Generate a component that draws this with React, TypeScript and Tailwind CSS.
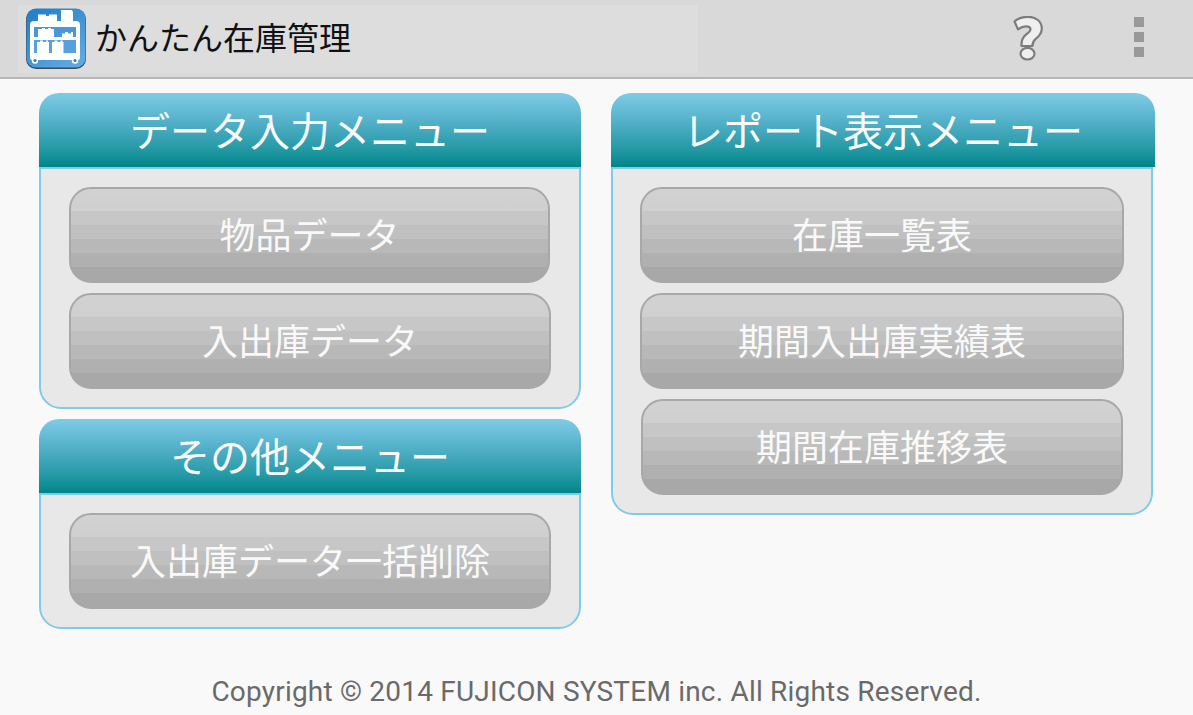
const jp = "font-['Noto_Sans_CJK_JP','Noto_Sans',sans-serif]";

function Logo() {
  return (
    <svg width="60" height="61" viewBox="0 0 60 61" className="shrink-0">
      <defs>
        <linearGradient id="lg" x1="0" y1="0" x2="0.7" y2="1">
          <stop offset="0" stopColor="#1f7cc6" />
          <stop offset="1" stopColor="#5ca8e2" />
        </linearGradient>
      </defs>
      <rect x="0" y="1" width="60" height="60" rx="10" fill="#3c4a57" />
      <rect x="0.5" y="0.5" width="59" height="59" rx="9.500" fill="url(#lg)" />
      <path
        fill="#fff"
        d="M12 13V6.500h8V8h3V6.500h8V13h4V2h11l1 2v9h3a4 4 0 0 1 4 4v33a2 2 0 0 1-2 2H6a2 2 0 0 1-2-2V17a4 4 0 0 1 4-4z"
      />
      <rect x="8" y="19" width="42" height="10" fill="#4a98da" />
      <rect x="8" y="32" width="42" height="13" fill="#55a1de" />
      <path fill="#fff" d="M12 29v-8h4v-1h3v1h3v-1h3v1h3v8zM36 29v-3.500h3V24h3v1.500h3V24h2v5z" />
      <path fill="#fff" d="M11 45V34h3v-1.500h3V34h3v-1.500h2V34h1v11zM26 45V34h2.500v-1.500h3V34h3v-1.500h2V34h1v11z" />
      <circle cx="9" cy="52.500" r="3.200" fill="#fff" />
      <circle cx="9" cy="52.500" r="1.600" fill="#2f7fbf" />
      <circle cx="49" cy="52.500" r="3.200" fill="#fff" />
      <circle cx="49" cy="52.500" r="1.600" fill="#2f7fbf" />
    </svg>
  );
}

function Help() {
  return (
    <svg width="30" height="45" viewBox="0 0 30 45" className="shrink-0">
      <path
        d="M1.500 5.500C5 2.300 9.500.8 15 .8c8 0 13.800 4.700 13.800 11.700 0 5.500-3.300 8.300-6.300 10.700-2.200 1.700-3 3.300-3 6.800H8.500c-.3-5.500 1-8.500 4.200-11.200 2.900-2.300 4.800-3.500 4.800-5.300 0-1.800-1.500-3.200-4.500-3.200-2.800 0-5.300 1-8 3z"
        fill="#efefef"
        stroke="#7d7d7d"
        strokeWidth="2.200"
        strokeLinejoin="round"
      />
      <ellipse cx="14.500" cy="37.700" rx="7" ry="5.800" fill="#efefef" stroke="#7d7d7d" strokeWidth="2.200" />
    </svg>
  );
}

function MenuButton({ label, className = "" }: { label: string; className?: string }) {
  return (
    <button
      className={`h-[96px] rounded-[22px] border-2 border-[#a8a8a8] bg-[linear-gradient(#d2d2d2_0,#cfcfcf_24%,#c7c7c7_24%,#c7c7c7_39%,#c0c0c0_39%,#c0c0c0_54%,#b8b8b8_54%,#b8b8b8_70%,#b0b0b0_70%,#b0b0b0_85%,#a8a8a8_85%,#a8a8a8_100%)] pb-[4px] text-[36px] leading-none text-[#f9f9f9] ${className}`}
    >
      {label}
    </button>
  );
}

function Panel({
  title,
  children,
  bodyClass = "",
  pad = "px-[28px]",
}: {
  title: string;
  children: React.ReactNode;
  bodyClass?: string;
  pad?: string;
}) {
  return (
    <section className="flex flex-col">
      <div className="flex h-[74px] items-center justify-center rounded-t-[20px] bg-[linear-gradient(#80cbe6_0,#66bcd6_22%,#45a9be_50%,#259aa6_75%,#0c8c92_92%,#008488_100%)] pb-[2px] text-[40px] leading-none text-[#fafafa]">
        {title}
      </div>
      <div
        className={`flex flex-col gap-[10px] rounded-b-[22px] border-2 border-[#7fcbe9] bg-[#e8e8e8] py-[18px] ${pad} ${bodyClass}`}
      >
        {children}
      </div>
    </section>
  );
}

export default function App() {
  return (
    <div className={`flex h-[715px] w-[1193px] flex-col overflow-hidden bg-[#f9f9f9] ${jp}`}>
      <header className="flex h-[79px] shrink-0 items-center border-b-2 border-[#b7b7b7] bg-[#d9d9d9] pl-[18px]">
        <div className="flex h-[68px] w-[680px] items-center gap-[10px] bg-[#dddddd] pl-[8px]">
          <Logo />
          <span className="pb-[6px] text-[32px] leading-none text-[#111] -ml-px">かんたん在庫管理</span>
        </div>
        <div className="ml-[315px] flex w-[30px] justify-center">
          <Help />
        </div>
        <div className="mb-[3px] ml-[91px] flex flex-col gap-[5px]">
          <span className="size-[10px] bg-[#999]" />
          <span className="size-[10px] bg-[#999]" />
          <span className="size-[10px] bg-[#999]" />
        </div>
      </header>

      <main className="flex flex-1 items-start gap-[30px] pt-[14px] pl-[39px]">
        <div className="flex w-[542px] flex-col gap-[10px]">
          <Panel title="データ入力メニュー">
            <MenuButton label="物品データ" className="mr-px" />
            <MenuButton label="入出庫データ" />
          </Panel>
          <Panel title="その他メニュー">
            <MenuButton label="入出庫データ一括削除" />
          </Panel>
        </div>
        <div className="flex w-[544px] flex-col">
          <Panel title="レポート表示メニュー" bodyClass="mr-[2px]" pad="px-[27px]">
            <MenuButton label="在庫一覧表" />
            <MenuButton label="期間入出庫実績表" />
            <MenuButton label="期間在庫推移表" className="mx-px" />
          </Panel>
        </div>
      </main>

      <footer className="flex h-[40px] shrink-0 justify-center font-['Roboto',sans-serif] text-[28px] leading-[33px] tracking-[0.2px] text-[#6a6a6a]">
        Copyright © 2014 FUJICON SYSTEM inc. All Rights Reserved.
      </footer>
    </div>
  );
}
